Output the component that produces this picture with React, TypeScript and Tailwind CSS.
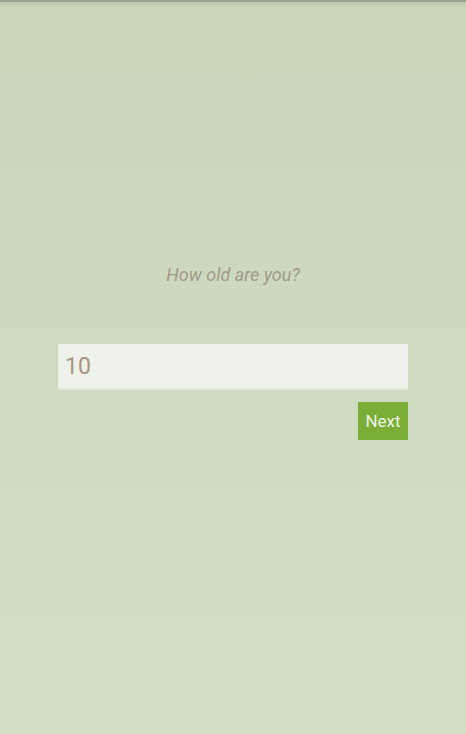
export default function App() {
  return (
    <div
      className="flex h-[734px] w-full flex-col bg-gradient-to-b from-[#c9d6ba] to-[#d3dfc6]"
      style={{ fontFamily: "Roboto, 'Noto Sans', sans-serif" }}
    >
      {/* top shadow */}
      <div className="h-[2px] bg-[#9aa28f]" />
      <div className="h-[5px] bg-gradient-to-b from-[#bcc8ad] to-transparent" />

      <div className="flex flex-col items-center pt-[254px]">
        <p className="text-[18px] italic leading-[28px] text-[#a39a8d]">How old are you?</p>
      </div>

      <div className="mx-[58px] mt-[55px] flex flex-col">
        <div className="flex h-[46px] items-center border-b-2 border-[#e2e6da] bg-[#eff2ea] pl-[7px] pt-[3px]">
          <span className="text-[23px] text-[#a59584]">10</span>
        </div>
        <div className="mt-[12px] flex justify-end">
          <button className="flex h-[38px] w-[50px] items-center justify-center bg-[#7aae36] pt-[2px] text-[17px] text-[#eef3e4]">
            Next
          </button>
        </div>
      </div>
    </div>
  )
}
